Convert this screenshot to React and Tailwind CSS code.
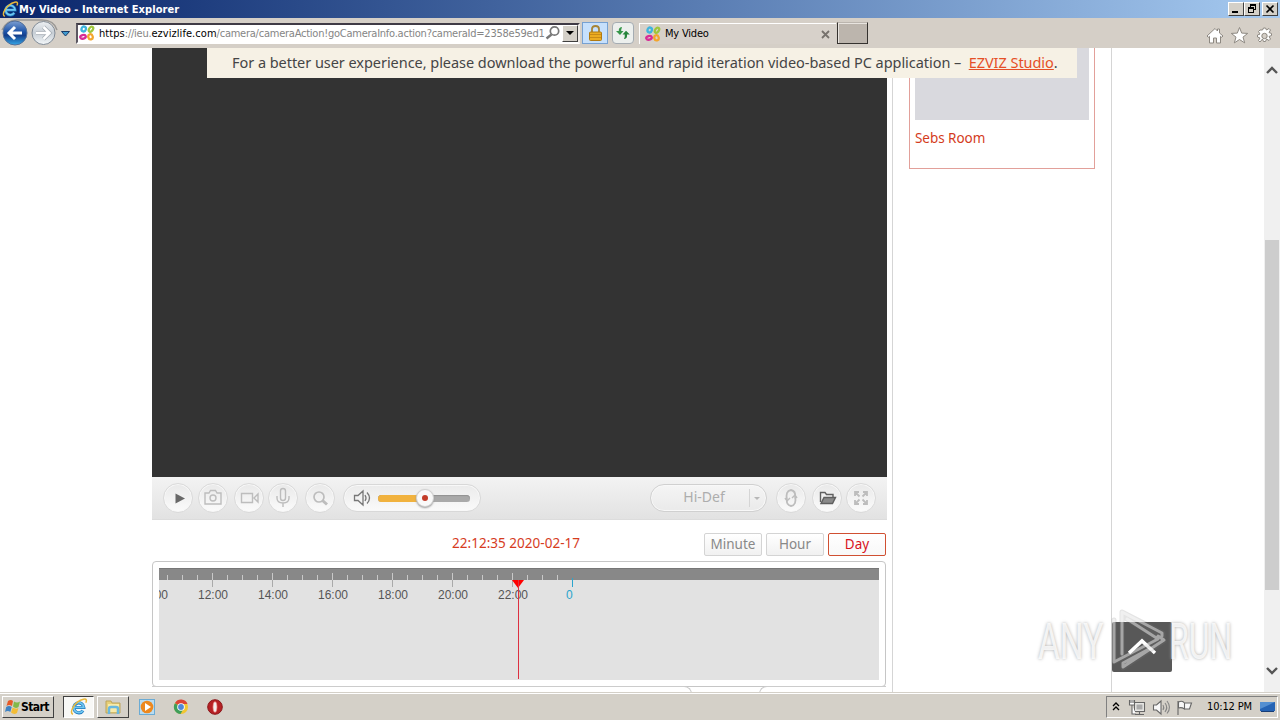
const HOURS = ['12:00', '14:00', '16:00', '18:00', '20:00', '22:00'];

function IeLogo({ size = 16 }) {
  return (
    <svg width={size} height={size} viewBox="0 0 18 18" fill="none" className="shrink-0">
      <path d="M4.5 9.5h9.3A5 5 0 1 0 13 12.6" stroke="#1d77bd" strokeWidth="3.2" />
      <path d="M4.5 9.3h9.3A5 5 0 1 0 13 12.4" stroke="#70c7f1" strokeWidth="1.8" />
      <path d="M3 16.2C-1.5 15 4.5 3.5 13.5 1.3c3.3-.8 3.3 1.3 2.3 3.4" stroke="#e9b83b" strokeWidth="1.5" />
    </svg>
  );
}

function EzvizLogo() {
  return (
    <svg width="16" height="16" viewBox="0 0 16 16" fill="none" strokeWidth="2.3" className="shrink-0">
      <ellipse cx="4.7" cy="4" rx="2.2" ry="2.5" stroke="#3fb4dd" transform="rotate(15 4.7 4)" />
      <ellipse cx="12" cy="4.2" rx="1.8" ry="2.8" stroke="#9fc63b" transform="rotate(35 12 4.2)" />
      <ellipse cx="4" cy="11.8" rx="1.8" ry="2.8" stroke="#d72c96" transform="rotate(75 4 11.8)" />
      <ellipse cx="11.5" cy="11.8" rx="2.2" ry="2.6" stroke="#f3a52c" transform="rotate(-15 11.5 11.8)" />
    </svg>
  );
}

function TitleBar() {
  return (
    <div className="flex h-[18px] shrink-0 items-center bg-linear-to-r from-[#0a246a] to-[#a6caf0] pl-[2px] pr-[2px]">
      <IeLogo size={17} />
      <span className="mt-px whitespace-nowrap text-[11px] leading-[18px] font-bold tracking-[0.08px] text-white">My Video - Internet Explorer</span>
      <div className="ml-auto flex">
        {['min', 'restore', 'close'].map((b) => (
          <div key={b} className={`flex h-[14px] w-4 items-center justify-center border border-t-white border-l-white border-r-[#404040] border-b-[#404040] bg-[#d4d0c8] ${b === 'close' ? 'ml-[2px]' : ''}`}>
            <svg width="12" height="10" viewBox="0 0 12 10" stroke="#000" fill="none" shapeRendering="crispEdges">
              {b === 'min' && <path d="M2 8h6" strokeWidth="2" />}
              {b === 'restore' && <path d="M4 1h6M4.500 1v3M9.500 1v5M7 5.500h3M2 4h6M2.500 4v5M7.500 4v5M2 8.500h6" strokeWidth="1.300" />}
              {b === 'close' && <path d="M2.500 1.500l7 7M9.500 1.500l-7 7" strokeWidth="1.700" shapeRendering="auto" />}
            </svg>
          </div>
        ))}
      </div>
    </div>
  );
}

function NavBar() {
  return (
    <div className="flex h-[30px] shrink-0 items-center bg-[#d5cfc7]">
      <svg width="76" height="30" viewBox="0 0 76 30" className="shrink-0">
        <defs>
          <linearGradient id="back" x2="0" y2="1">
            <stop stopColor="#7d9fd2" />
            <stop offset=".45" stopColor="#1d53a8" />
            <stop offset=".6" stopColor="#153f8c" />
            <stop offset="1" stopColor="#35a7e8" />
          </linearGradient>
          <linearGradient id="fwd" x2="0" y2="1">
            <stop stopColor="#edf0f2" />
            <stop offset=".5" stopColor="#c7ced5" />
            <stop offset="1" stopColor="#f4f8fa" />
          </linearGradient>
        </defs>
        <path d="M2 12Q7 1 19 2h23q12 0 15 10" stroke="#9b9996" strokeWidth="1.500" fill="none" />
        <circle cx="15" cy="15" r="12" fill="url(#back)" stroke="#536f99" />
        <circle cx="43.500" cy="15" r="11.500" fill="url(#fwd)" stroke="#818b96" />
        <path d="M22 15H10M15 9l-6 6 6 6" stroke="#fff" strokeWidth="3" fill="none" />
        <path d="M36 15h12M43.500 9l6 6-6 6" stroke="#a4abb3" strokeWidth="4" fill="none" />
        <path d="M36 15h12M43.500 9l6 6-6 6" stroke="#fff" strokeWidth="2.600" fill="none" />
        <path d="M61.500 13.500h8l-4 4.500z" fill="#3f9bd0" stroke="#173b68" />
      </svg>
      <div className="flex h-[21px] w-[504px] shrink-0 items-center border-2 border-t-[#3f3a45] border-l-[#5b5761] border-r-[#eeeae6] border-b-white bg-white pl-px">
        <EzvizLogo />
        <div className="ml-1 w-[446px] shrink-0 overflow-hidden whitespace-nowrap text-[11px] leading-[17px] tracking-[-0.24px] text-[#858585]">
          <span className="tracking-[0.06px] text-black">https</span>://ieu.<span className="tracking-[0.06px] text-black">ezvizlife.com</span>/camera/cameraAction!goCameraInfo.action?cameraId=2358e59ed1
        </div>
        <svg width="16" height="16" viewBox="0 0 16 16" fill="none" stroke="#777" className="mr-px shrink-0">
          <circle cx="9.500" cy="6" r="4.200" strokeWidth="1.700" />
          <path d="M6.500 9.500L1.500 13.500" strokeWidth="2.400" />
        </svg>
        <div className="flex h-[17px] w-4 shrink-0 items-center justify-center border border-t-white border-l-white border-r-[#404040] border-b-[#404040] bg-[#d4d0c8]">
          <div className="border-x-4 border-t-4 border-x-transparent border-t-black" />
        </div>
      </div>
      <div className="ml-[2px] flex h-[22px] w-[26px] shrink-0 items-center justify-center border border-[#76a1d2] bg-[#c6e0fc]">
        <svg width="15" height="18" viewBox="0 0 15 18">
          <path d="M4 9V5q0-3 3.500-3T11 5v4" fill="none" stroke="#a78435" strokeWidth="1.800" />
          <rect x="1.500" y="8" width="12" height="8.500" rx="1" fill="#ecac21" stroke="#b07a13" />
          <path d="M2 10.500h11M2 13.500h11" stroke="#c98b17" />
        </svg>
      </div>
      <div className="ml-1 flex h-[22px] w-[22px] shrink-0 items-center justify-center rounded-sm border border-[#a5acb2] bg-[#ecefed]">
        <svg width="16" height="16" viewBox="0 0 16 16">
          <path d="M6.500 2Q3.500 2.500 3.800 6H1l4 4 3.500-4H6.200Q6 4 7 2.500z" fill="#36964a" />
          <path d="M9.500 14q3-.5 2.500-4.500h2.800L11 5.800 7.500 9.500h2.200q.5 2.500-.7 4z" fill="#26843b" />
        </svg>
      </div>
      <div className="ml-[5px] flex h-[21px] w-[197px] shrink-0 items-center border-t border-l border-white bg-[#d7d1ca] pl-[5px] pr-[4px]">
        <EzvizLogo />
        <span className="mt-[2px] ml-1 whitespace-nowrap text-[11px] tracking-[-0.2px] text-black">My Video</span>
        <svg width="9" height="9" viewBox="0 0 9 9" className="mt-px mr-[2px] ml-auto" stroke="#77726d" strokeWidth="1.800">
          <path d="M1 1l7 7M8 1L1 8" />
        </svg>
      </div>
      <div className="ml-px h-[22px] w-[31px] shrink-0 border border-t-[#bbb5ae] border-l-[#35322f] border-r-[#35322f] border-b-[#35322f] bg-[#bcb5ad] shadow-[inset_1px_1px_0_#e8e4df]" />
      <svg width="72" height="22" viewBox="0 0 72 22" fill="#fff" stroke="#8d8881" className="mt-[6px] mr-1 ml-auto shrink-0">
        <path d="M3 11L11 3.500 13.500 6V4h2v4L19 11l-1.300 1.300-1.200-1V18h-4v-5h-3v5h-4v-6.700l-1.200 1z" />
        <path d="M35.500 2.500l2.200 5.600 6 .3-4.700 3.700 1.700 5.800-5.200-3.400-5.200 3.400 1.700-5.800-4.700-3.700 6-.3z" />
        <path d="M58.500 5l1-2h2l1 2 2.500-1.500 1.500 1.500-1.500 2.500 2.500 1v2l-2.500 1 1.500 2.500-1.500 1.500-2.500-1.500-1 2.500h-2l-1-2.500L56 17l-1.500-1.500L56 13l-2.500-1v-2L56 9l-1.500-2.500L56 5z" />
        <circle cx="60.500" cy="11" r="2.700" fill="#d5cfc7" />
      </svg>
    </div>
  );
}

function RoundButton({ className, children }) {
  return (
    <div className={`h-[30px] w-[30px] shrink-0 rounded-full border border-[#dadada] bg-linear-to-b from-[#e9e9e9] to-[#fbfbfb] shadow-[inset_0_0_0_1px_#f7f7f7] ${className}`}>
      <svg width="28" height="28" viewBox="0 0 28 28" fill="none" stroke="#bdbdbd" strokeWidth="1.400">
        {children}
      </svg>
    </div>
  );
}

function Controls() {
  return (
    <div className="flex h-[43px] shrink-0 items-center border-b border-[#dcdcdc] bg-linear-to-b from-[#f3f3f3] to-[#e2e2e2] pl-[11px]">
      <RoundButton>
        <path d="M11.500 9.500l9.500 5-9.500 5z" fill="#686868" stroke="none" />
      </RoundButton>
      <RoundButton className="ml-[5px]">
        <path d="M6 9h4l1.500-2.500h5L18 9h4v11H6z" />
        <circle cx="14" cy="14" r="3" />
      </RoundButton>
      <RoundButton className="ml-[6px]">
        <path d="M6.500 9.500h11v9h-11zM19 14l4-4v8z" />
      </RoundButton>
      <RoundButton className="ml-[4px]">
        <rect x="11.500" y="4.500" width="5" height="12" rx="2.500" />
        <path d="M8 12v2q0 5 6 5t6-5v-2M14 19v4" />
      </RoundButton>
      <RoundButton className="ml-[7px]">
        <circle cx="13" cy="13" r="5" strokeWidth="1.700" />
        <path d="M16.500 16.500l4.500 4" strokeWidth="3" />
      </RoundButton>
      <div className="ml-[8px] flex h-7 w-[138px] shrink-0 items-center rounded-full border border-[#d8d8d8] bg-linear-to-b from-[#ebebeb] to-[#fafafa] pl-[9px] shadow-[inset_0_0_0_1px_#f8f8f8]">
        <svg width="20" height="20" viewBox="0 0 20 20" fill="none" stroke="#777" strokeWidth="1.300">
          <path d="M1.500 7.500h3.500L10 3v14l-5-4.500H1.500zM12 7q2 3 0 6M14 4.500q5 5.500 0 11" />
        </svg>
        <div className="relative ml-[5px] flex h-[7px] w-[92px] rounded-full bg-[#a9a9a9] shadow-[inset_0_1px_1px_#929292]">
          <div className="h-[7px] w-[46px] rounded-l-full bg-[#f1b23e]" />
          <div className="absolute -top-[6px] left-[38px] flex h-[18px] w-[18px] items-center justify-center rounded-full border border-[#d1d1d1] bg-[#f9f9f9] shadow-[0_1px_2px_#999]">
            <div className="h-[6px] w-[6px] rounded-full bg-[#c33c29]" />
          </div>
        </div>
      </div>
      <div className="ml-[169px] flex h-7 w-[117px] shrink-0 items-center rounded-full border border-[#d0d0d0] bg-linear-to-b from-[#f5f5f5] to-[#eaeaea] shadow-[inset_0_0_0_1px_#f8f8f8]">
        <div className="flex h-[18px] w-[99px] items-center justify-center border-r border-[#d5d5d5] pb-[2px] pl-[8px] font-['Noto_Sans'] text-[14px] leading-[18px] text-[#adadad]">Hi-Def</div>
        <div className="ml-1 border-x-[3px] border-t-[3px] border-x-transparent border-t-[#b7b7b7]" />
      </div>
      <RoundButton className="ml-[9px]">
        <path d="M10 16q-2-9 4-10 5 1 4 7M18 12q2 9-4 10-5-1-4-7" strokeWidth="1.800" />
        <path d="M8 14l2 3 3-3M15 14l3-3 2 3" />
      </RoundButton>
      <RoundButton className="ml-[6px]">
        <path d="M7.500 18V8.500H12l1.500 2H20V13" stroke="#606060" />
        <path d="M8 19.500l3-6h11.500l-3 6z" fill="#8a8a8a" stroke="#5f5f5f" />
      </RoundButton>
      <RoundButton className="ml-[4px]">
        <path d="M8 12V8h4M8 8l4.500 4.500M16 8h4v4M20 8l-4.500 4.500M8 16v4h4M8 20l4.500-4.500M20 16v4h-4M20 20l-4.500-4.500" strokeWidth="1.800" />
      </RoundButton>
    </div>
  );
}

function Timeline() {
  return (
    <div className="mt-[5px] h-[126px] w-[734px] shrink-0 rounded-sm border border-[#c6c6c6] bg-white p-[6px]">
      <div className="relative h-[112px] w-[720px] overflow-hidden bg-[#e2e2e2]">
        <div className="h-3 border-t border-[#777] bg-[#888]" />
        {/* ruler marks, one for each half hour */}
        <svg width="720" height="20" className="absolute top-0 left-0" shapeRendering="crispEdges">
          {Array.from({ length: 27 }, (_, i) => {
            const x = 8.5 + i * 15;
            const major = (i - 3) % 4 === 0;
            return <path key={i} d={`M${x} ${major ? 5 : 7}v${major ? 7 : 5}`} stroke="#c9c9c9" />;
          })}
          {HOURS.map((h, i) => (
            <path key={h} d={`M${53.5 + i * 60} 12v7`} stroke="#aaa" />
          ))}
          <path d="M413.500 10v9" stroke="#2aa5cd" />
        </svg>
        <div className="flex pt-[8px] font-['Liberation_Sans'] text-[12px] leading-[14px] text-[#555]">
          <span className="-ml-[21px] w-[30px] shrink-0 text-right">10:00</span>
          {HOURS.map((h, i) => (
            <span key={h} className={`${i === 0 ? 'ml-[15px]' : ''} w-[60px] shrink-0 text-center`}>{h}</span>
          ))}
          <span className="ml-[23px] text-[#2aa5cd]">0</span>
        </div>
        <div className="absolute top-3 left-[353px] border-x-[6px] border-t-[8px] border-x-transparent border-t-[#f00]" />
        <div className="absolute top-3 left-[359px] h-[99px] w-px bg-[#dd3040]" />
      </div>
    </div>
  );
}

function PlayerColumn() {
  return (
    <div className="flex w-[741px] shrink-0 flex-col border-r border-[#d5d5d5]">
      <div className="h-[429px] w-[735px] shrink-0 bg-[#333]" />
      <div className="w-[735px]">
        <Controls />
      </div>
      <div className="mt-3 flex h-6 w-[734px] shrink-0 items-center font-['Noto_Sans'] text-[13px] leading-[21px]">
        <span className="ml-[300px] pb-[2px] text-[13.5px] whitespace-nowrap tracking-[0.03px] text-[#d63c1e]">22:12:35 2020-02-17</span>
        <div className="ml-auto flex gap-1 text-center text-[#888]">
          <span className="h-[23px] w-[58px] rounded-xs border border-[#d4d4d4] bg-linear-to-b from-white to-[#f1f1f1] text-[13.5px]">Minute</span>
          <span className="h-[23px] w-[58px] rounded-xs border border-[#d4d4d4] bg-linear-to-b from-white to-[#f1f1f1] text-[13.5px]">Hour</span>
          <span className="h-[23px] w-[58px] rounded-xs border border-[#d05032] bg-linear-to-b from-white to-[#f8f8f8] text-[13.5px] text-[#d8131d]">Day</span>
        </div>
      </div>
      <Timeline />
      <div className="-mt-px flex h-[7px] w-[734px] shrink-0 justify-between overflow-hidden">
        <div className="h-3 w-[540px] rounded-tr-lg border-t border-r border-[#ccc]" />
        <div className="h-3 w-[127px] rounded-tl-lg border-t border-l border-[#ccc]" />
      </div>
    </div>
  );
}

function Watermark() {
  return (
    <div className="absolute top-[560px] left-[1030px] h-[70px] w-[210px] font-['Roboto'] text-[50px] leading-[50px] text-white/80 [text-shadow:0_0_4px_#aaa]">
      <span className="absolute top-[9px] left-[8px] origin-left scale-x-[0.67]">ANY</span>
      <span className="absolute top-[9px] left-[139px] origin-left scale-x-[0.64]">RUN</span>
      <svg width="60" height="66" viewBox="0 0 60 66" fill="none" strokeLinejoin="round" strokeLinecap="round" className="absolute top-0 left-[80px]">
        <path d="M12 46V4l41 21v4L15 10M4 12v42l10-5M13 60l41-27-37-22M13 60v-6l34-22" stroke="#777" strokeOpacity=".2" strokeWidth="5" />
        <path d="M12 46V4l40 21v3M4 12v42l44-23L17 11M13 59l41-27-6-4M13 59v-4l26-14" stroke="#fff" strokeOpacity=".45" strokeWidth="3" />
      </svg>
    </div>
  );
}

function PageView() {
  return (
    <div className="relative flex h-[644px] shrink-0 overflow-hidden bg-white pl-[152px]">
      <PlayerColumn />
      <div className="h-full w-[219px] shrink-0 border-r border-[#d5d5d5] pl-4">
        <div className="h-[121px] w-[186px] border border-t-0 border-[#e2a09a] px-[5px]">
          <div className="h-[72px] bg-[#d9d9de]" />
          <p className="mt-2 font-['Noto_Sans'] text-[13.5px] leading-[20px] tracking-[-0.05px] text-[#d43b1c]">Sebs Room</p>
        </div>
      </div>
      <div className="ml-auto flex w-4 shrink-0 flex-col items-center bg-[#f0f0f0]">
        <svg width="14" height="12" viewBox="0 0 14 12" className="mt-4" fill="none" stroke="#555" strokeWidth="2.400">
          <path d="M2 9l5-5 5 5" />
        </svg>
        <div className="mt-[164px] h-[350px] w-[14px] bg-[#cdcdcd]" />
        <svg width="14" height="12" viewBox="0 0 14 12" className="mt-[75px]" fill="none" stroke="#555" strokeWidth="2.400">
          <path d="M2 3l5 5 5-5" />
        </svg>
      </div>
      <div className="absolute top-0 left-[207px] h-[30px] w-[870px] bg-[#f6f1e5] pl-[25px] font-['Noto_Sans'] text-[14.5px] leading-[28px] tracking-[-0.045px] whitespace-nowrap text-[#454545]">
        For a better user experience, please download the powerful and rapid iteration video-based PC application –&nbsp; <a className="text-[#e54f27] underline">EZVIZ Studio</a>.
      </div>
      <div className="absolute top-[574px] left-[1112px] flex h-[50px] w-[60px] items-center justify-center rounded-xs bg-[#585858]">
        <svg width="30" height="20" viewBox="0 0 30 20" fill="none" stroke="#fff" strokeWidth="3.500">
          <path d="M2 16L15 4l13 12" />
        </svg>
      </div>
      <Watermark />
    </div>
  );
}

function Taskbar() {
  return (
    <div className="flex h-7 shrink-0 items-center border-t border-[#d4d0c8] bg-[#d4d0c8] pt-px pr-[2px] pl-[2px] shadow-[inset_0_1px_0_#fff]">
      <div className="flex h-[22px] w-[52px] items-center border border-t-white border-l-white border-r-[#404040] border-b-[#404040] pl-[2px]">
        <svg width="16" height="16" viewBox="0 0 16 16" className="shrink-0">
          <path d="M3 2q3-2 5 0L7 7Q4 5 1.500 7z" fill="#e65a28" />
          <path d="M9 2.500q3 2 6 0L13.500 8q-3 2-5.500-.5z" fill="#82b84a" />
          <path d="M1.200 8Q4 6 6.700 8l-1.400 5Q3 11 0 13z" fill="#3e83c4" />
          <path d="M7.700 8.500q3 2 5.700.5L12 14q-3 2-6-.5z" fill="#f3bd36" />
        </svg>
        <span className="text-[12px] font-bold tracking-[-0.6px] text-black">Start</span>
      </div>
      <div className="ml-[9px] flex h-[22px] w-[31px] items-center justify-center border border-t-[#404040] border-l-[#404040] border-r-white border-b-white bg-[#f8f8f6]">
        <IeLogo size={18} />
      </div>
      <div className="ml-[3px] flex h-[22px] w-[32px] items-center justify-center border border-t-white border-l-white border-r-[#404040] border-b-[#404040]">
        <svg width="18" height="18" viewBox="0 0 18 18">
          <path d="M2 3h5l1 2h8v10H2z" fill="#e6cf78" stroke="#bda45a" />
          <path d="M4 6h11v8H4z" fill="#f8eaa9" />
          <path d="M5 16v-5q0-2 2-2h5q2 0 2 2v5" fill="none" stroke="#69b8df" strokeWidth="2.500" />
        </svg>
      </div>
      <svg width="18" height="18" viewBox="0 0 18 18" className="ml-[9px]">
        <rect x="1.500" y="1.500" width="15" height="15" fill="#b9dcf1" stroke="#6babd4" />
        <circle cx="9" cy="9" r="6.300" fill="#ed881e" />
        <path d="M7 5l6 4-6 4z" fill="#fff" />
      </svg>
      <svg width="16" height="16" viewBox="0 0 16 16" className="ml-[17px]">
        <circle cx="8" cy="8" r="7" fill="#f1c632" />
        <path d="M8 8L2 4a7 7 0 0 1 12.500 1H8z" fill="#db4436" />
        <path d="M8 8L1.900 4.300A7 7 0 0 0 7.500 15L11 9z" fill="#3f9e5a" />
        <circle cx="8" cy="8" r="3.800" fill="#fff" />
        <circle cx="8" cy="8" r="2.900" fill="#4f87d8" />
      </svg>
      <svg width="16" height="16" viewBox="0 0 16 16" className="ml-[18px]">
        <circle cx="8" cy="8" r="7.300" fill="#b62125" stroke="#8c171a" />
        <ellipse cx="8" cy="8" rx="2" ry="5.300" fill="#f2eeee" stroke="#ef8781" strokeWidth=".700" />
      </svg>
      <div className="ml-auto flex h-[22px] w-[172px] items-center border border-t-[#808080] border-l-[#808080] border-r-white border-b-white">
        <svg width="10" height="12" viewBox="0 0 10 12" className="ml-1 shrink-0" fill="none" stroke="#000" strokeWidth="1.300">
          <path d="M2 5l3-3 3 3M2 9l3-3 3 3" />
        </svg>
        <svg width="66" height="18" viewBox="0 0 66 18" className="ml-[7px] shrink-0" fill="none" stroke="#666" strokeWidth="1.100">
          <path d="M6.500 4.500h10v9h-10zM7 16.500h9M11.500 14v2" fill="#e8e8e5" />
          <path d="M8.500 6.500h6v5h-6z" fill="#aaa" stroke="none" />
          <path d="M1.500 2v5h5V2M3 2v3M5 2v3M4 7v9h4" fill="#fff" />
          <path d="M25.500 7h3L33 3v13l-4.500-4h-3z" fill="#f8f8f8" />
          <path d="M35 7q1.500 2.500 0 5M37 5q3.500 4.500 0 9M39 3q5 6.500 0 12.500" stroke="#858585" />
          <path d="M50 3v14M50.500 4q4-2 6 1v6q-3-2-6-1zM56.500 5h7l-2 6h-5" fill="#f7f7f7" />
        </svg>
        <span className="mt-px ml-[13px] whitespace-nowrap text-[11px] tracking-[-0.15px] text-black">10:12 PM</span>
        <svg width="17" height="16" viewBox="0 0 17 16" className="mr-px ml-auto">
          <path d="M1 3h15v9H1z" fill="#2563b4" />
          <path d="M1 3h15L1 10z" fill="#548fd1" />
          <path d="M2 12.500h13" stroke="#183d76" />
        </svg>
      </div>
    </div>
  );
}

export default function App() {
  return (
    <div className="flex h-[720px] w-[1280px] flex-col overflow-hidden bg-white font-['DejaVu_Sans_Condensed','DejaVu_Sans',sans-serif]">
      <TitleBar />
      <NavBar />
      <PageView />
      <Taskbar />
    </div>
  );
}
